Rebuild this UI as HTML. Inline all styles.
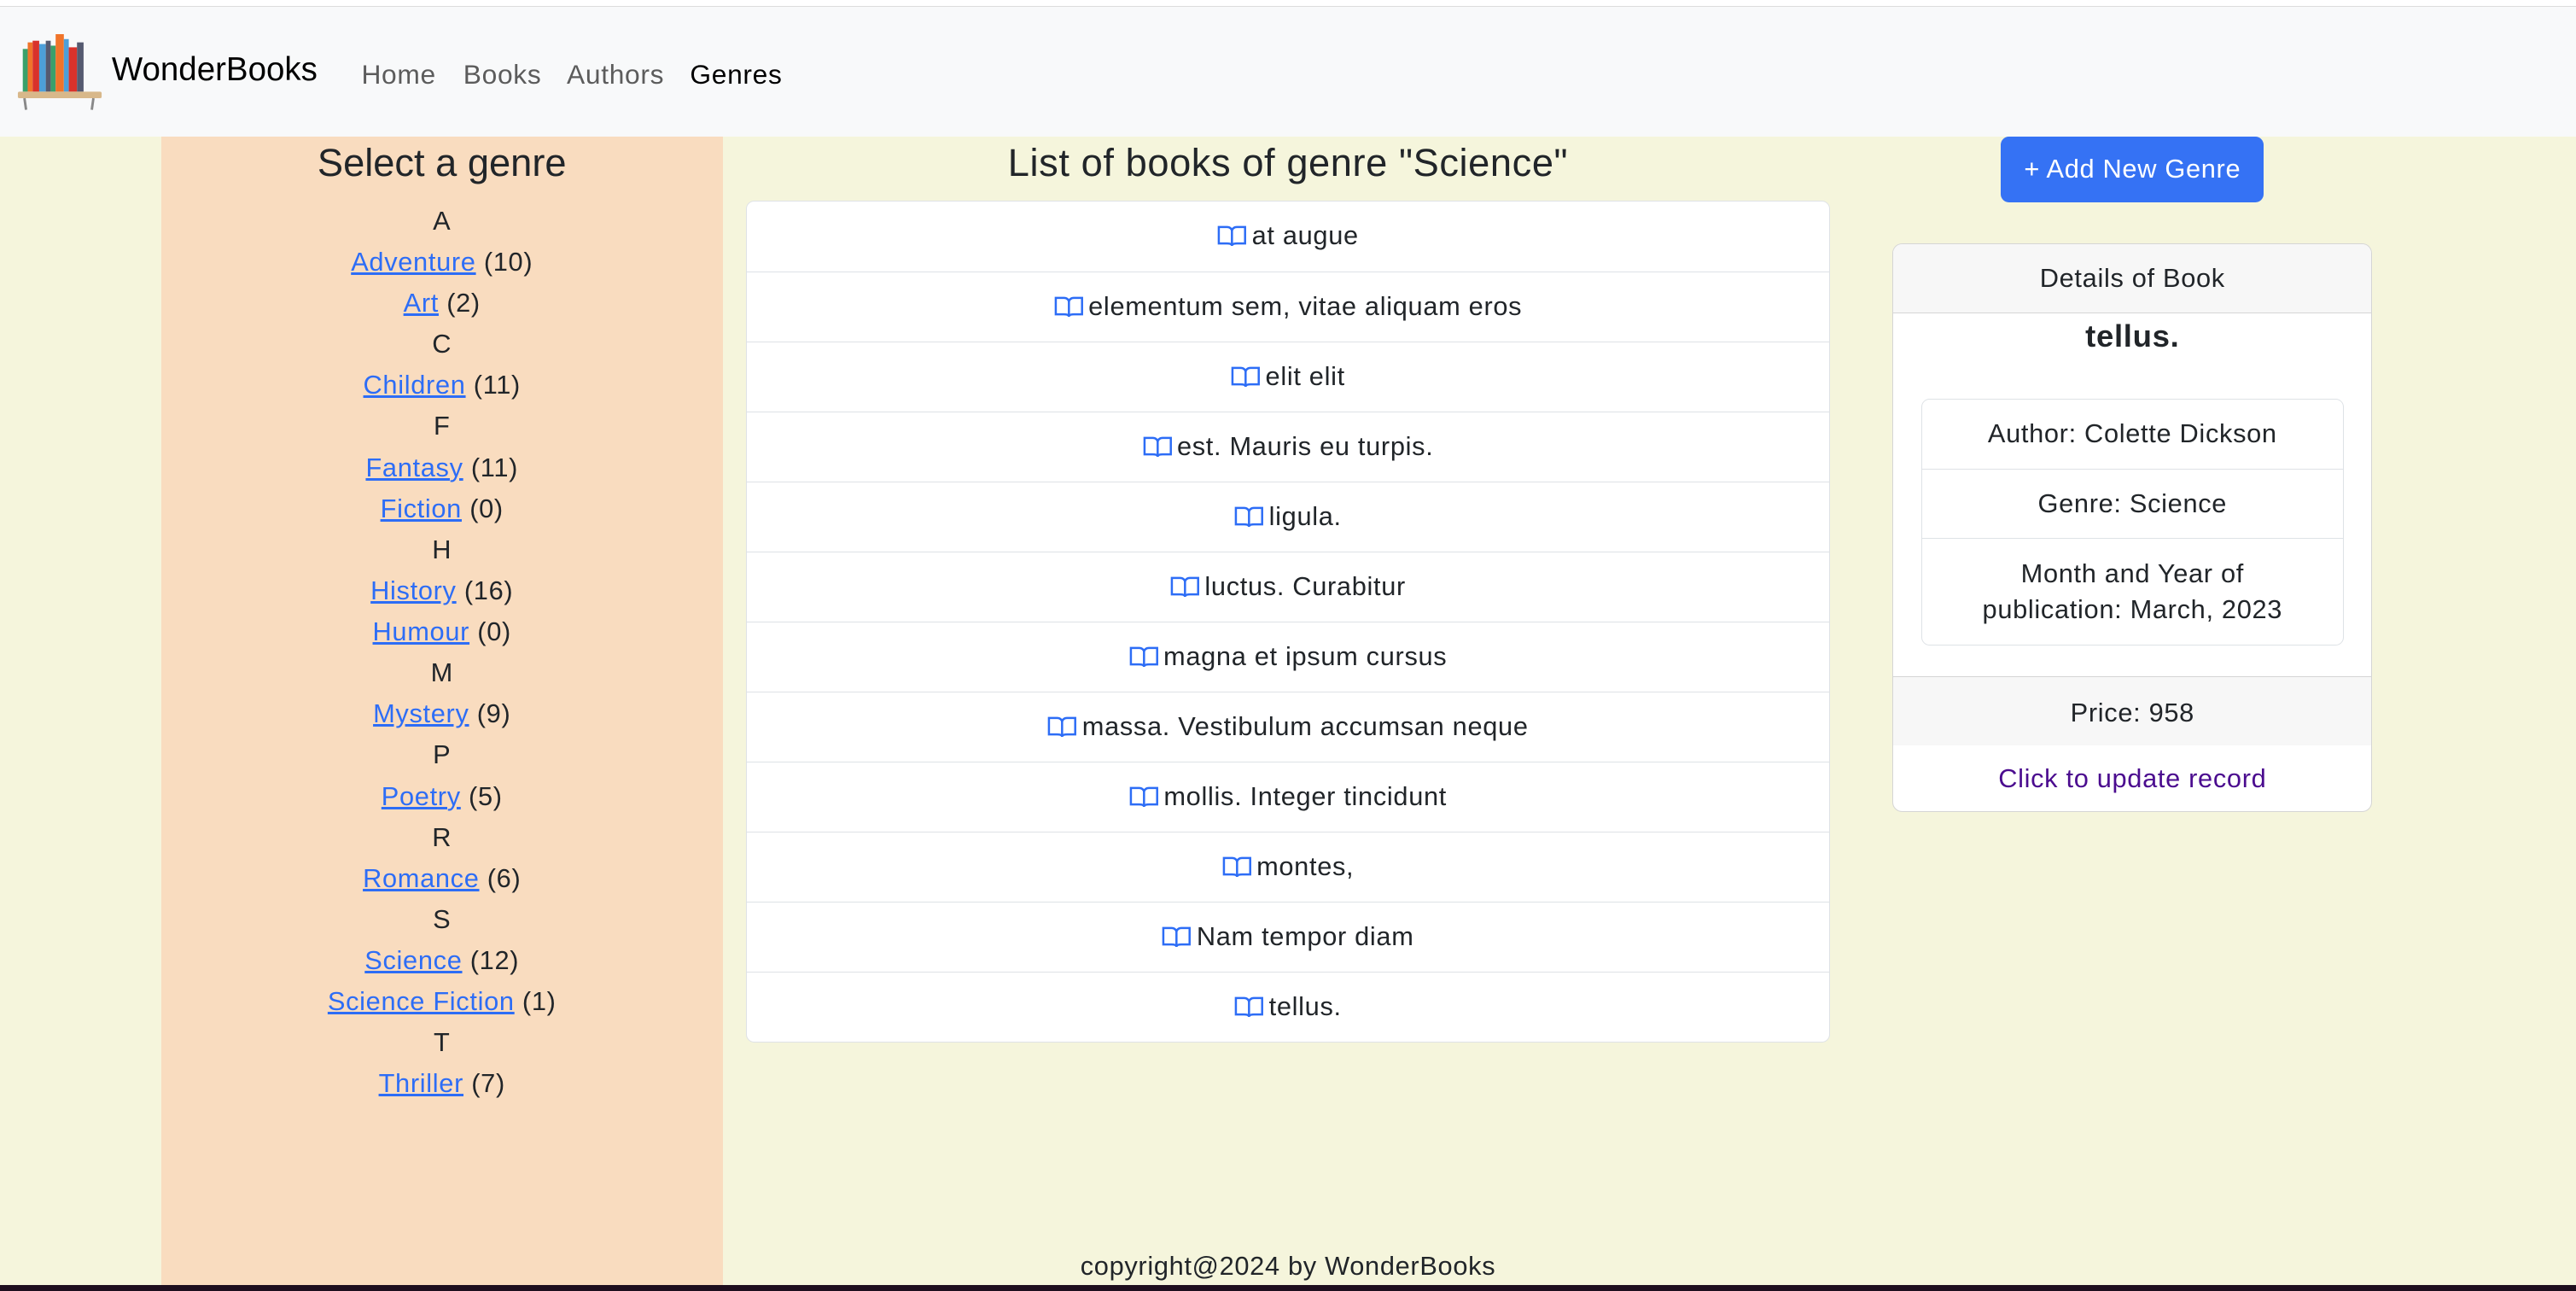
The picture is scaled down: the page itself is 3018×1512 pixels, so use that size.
<!DOCTYPE html>
<html><head><meta charset="utf-8"><style>
*{box-sizing:border-box;margin:0;padding:0}
html,body{width:3018px;height:1512px;overflow:hidden;background:#f5f5dc}
#w{zoom:1.92474;width:1568px;height:786px;position:relative;font-family:"Liberation Sans",sans-serif;color:#212529;font-size:16px;background:#f5f5dc;letter-spacing:0.35px}
.top{position:absolute;left:0;top:0;width:1568px;height:4px;background:#fff;border-bottom:1px solid #dcdcdc}
nav{position:absolute;left:0;top:4px;width:1568px;height:79px;background:#f8f9fa}
.brand{position:absolute;left:68px;top:27px;font-size:20px;color:#000;letter-spacing:0}
.nl{position:absolute;top:32px;font-size:16.5px;color:#5c5c5c}
.side{position:absolute;left:98px;top:83px;width:342px;height:703px;background:#f9dcbf;text-align:center}
.side h2{font-size:23.5px;font-weight:normal;margin-top:2px;line-height:28px;letter-spacing:0}
.side div{line-height:25px;font-size:16px}
.side div:first-of-type{margin-top:9px}
a{color:#2d6df6;text-decoration:underline}
.mt{position:absolute;left:454px;top:83px;width:660px;text-align:center;font-size:23.5px;line-height:32px;letter-spacing:0.3px}
.list{position:absolute;left:454px;top:122px;width:660px;background:#fff;border:1px solid #dee2e6;border-radius:5px}
.list div{height:42.6px;line-height:42px;text-align:center;border-top:1px solid #dee2e6;font-size:16px}
.list div:first-child{border-top:none}
.bk{display:inline-block;vertical-align:-2px;margin-right:3px}
.btn{position:absolute;left:1218px;top:83px;width:160px;height:40px;background:#3572f4;color:#fff;border-radius:5px;text-align:center;line-height:40px;font-size:16px}
.card{position:absolute;left:1152px;top:148px;width:292px;height:346px;background:#fff;border:1px solid #d5d5d5;border-radius:6px;overflow:hidden;text-align:center}
.ch{height:42px;line-height:42px;background:#f7f7f7;border-bottom:1px solid #d5d5d5}
.ct{font-weight:bold;font-size:19px;margin-top:2px;line-height:24px}
.inner{margin:26px 17px 0;border:1px solid #dee2e6;border-radius:5px}
.inner div{border-top:1px solid #dee2e6;padding:10px 4px;line-height:22px}
.inner div.m{padding:10px 30px}
.inner div:first-child{border-top:none}
.cf{position:absolute;left:0;top:263px;width:100%;height:42px;line-height:44px;background:#f7f7f7;border-top:1px solid #d5d5d5}
.cl{position:absolute;left:0;top:316px;width:100%;color:#4b0c8f}
.foot{position:absolute;left:454px;top:761px;width:660px;text-align:center;font-size:16px}
.dark{position:absolute;left:0;top:782px;width:1568px;height:4px;background:#1e0e1e}
</style></head><body><div id="w">
<div class="top"></div>
<nav>
<svg style="position:absolute;left:10px;top:17px" width="53" height="46" viewBox="0 0 53 46">
<rect x="4" y="9" width="3" height="26" fill="#3aa06a"/><rect x="7" y="5" width="3" height="30" fill="#f0742a"/>
<rect x="10" y="4" width="4" height="31" fill="#d9322b"/><rect x="14" y="6" width="4" height="29" fill="#4d9fd8"/>
<rect x="18" y="4" width="3" height="31" fill="#555a70"/><rect x="21" y="7" width="3" height="28" fill="#3aa06a"/>
<rect x="24" y="0" width="5" height="35" fill="#f0742a"/><rect x="29" y="3" width="3" height="32" fill="#4d9fd8"/>
<rect x="32" y="8" width="5" height="27" fill="#d9322b"/><rect x="37" y="5" width="4" height="30" fill="#555a70"/>
<rect x="1" y="35" width="51" height="4" rx="1" fill="#d8b88a"/>
<path d="M5 39 L6 46 M47 39 L46 46" stroke="#888" stroke-width="1.5"/></svg>
<div class="brand">WonderBooks</div>
<div class="nl" style="left:220px">Home</div><div class="nl" style="left:282px">Books</div><div class="nl" style="left:345px">Authors</div><div class="nl" style="left:420px;color:#000">Genres</div>
</nav>
<div class="side"><h2>Select a genre</h2>
<div>A</div><div><a>Adventure</a> (10)</div><div><a>Art</a> (2)</div><div>C</div><div><a>Children</a> (11)</div><div>F</div><div><a>Fantasy</a> (11)</div><div><a>Fiction</a> (0)</div><div>H</div><div><a>History</a> (16)</div><div><a>Humour</a> (0)</div><div>M</div><div><a>Mystery</a> (9)</div><div>P</div><div><a>Poetry</a> (5)</div><div>R</div><div><a>Romance</a> (6)</div><div>S</div><div><a>Science</a> (12)</div><div><a>Science Fiction</a> (1)</div><div>T</div><div><a>Thriller</a> (7)</div>
</div>
<div class="mt">List of books of genre "Science"</div>
<div class="list">
<div><svg class="bk" width="18" height="14" viewBox="0 0 18 14"><path d="M1 1.5h5c1.6 0 3 1 3 2.5v9c0-1-1.2-1.5-3-1.5H1zM17 1.5h-5c-1.6 0-3 1-3 2.5v9c0-1 1.2-1.5 3-1.5h5z" fill="none" stroke="#2d6df6" stroke-width="1.3"/></svg>at augue</div>
<div><svg class="bk" width="18" height="14" viewBox="0 0 18 14"><path d="M1 1.5h5c1.6 0 3 1 3 2.5v9c0-1-1.2-1.5-3-1.5H1zM17 1.5h-5c-1.6 0-3 1-3 2.5v9c0-1 1.2-1.5 3-1.5h5z" fill="none" stroke="#2d6df6" stroke-width="1.3"/></svg>elementum sem, vitae aliquam eros</div>
<div><svg class="bk" width="18" height="14" viewBox="0 0 18 14"><path d="M1 1.5h5c1.6 0 3 1 3 2.5v9c0-1-1.2-1.5-3-1.5H1zM17 1.5h-5c-1.6 0-3 1-3 2.5v9c0-1 1.2-1.5 3-1.5h5z" fill="none" stroke="#2d6df6" stroke-width="1.3"/></svg>elit elit</div>
<div><svg class="bk" width="18" height="14" viewBox="0 0 18 14"><path d="M1 1.5h5c1.6 0 3 1 3 2.5v9c0-1-1.2-1.5-3-1.5H1zM17 1.5h-5c-1.6 0-3 1-3 2.5v9c0-1 1.2-1.5 3-1.5h5z" fill="none" stroke="#2d6df6" stroke-width="1.3"/></svg>est. Mauris eu turpis.</div>
<div><svg class="bk" width="18" height="14" viewBox="0 0 18 14"><path d="M1 1.5h5c1.6 0 3 1 3 2.5v9c0-1-1.2-1.5-3-1.5H1zM17 1.5h-5c-1.6 0-3 1-3 2.5v9c0-1 1.2-1.5 3-1.5h5z" fill="none" stroke="#2d6df6" stroke-width="1.3"/></svg>ligula.</div>
<div><svg class="bk" width="18" height="14" viewBox="0 0 18 14"><path d="M1 1.5h5c1.6 0 3 1 3 2.5v9c0-1-1.2-1.5-3-1.5H1zM17 1.5h-5c-1.6 0-3 1-3 2.5v9c0-1 1.2-1.5 3-1.5h5z" fill="none" stroke="#2d6df6" stroke-width="1.3"/></svg>luctus. Curabitur</div>
<div><svg class="bk" width="18" height="14" viewBox="0 0 18 14"><path d="M1 1.5h5c1.6 0 3 1 3 2.5v9c0-1-1.2-1.5-3-1.5H1zM17 1.5h-5c-1.6 0-3 1-3 2.5v9c0-1 1.2-1.5 3-1.5h5z" fill="none" stroke="#2d6df6" stroke-width="1.3"/></svg>magna et ipsum cursus</div>
<div><svg class="bk" width="18" height="14" viewBox="0 0 18 14"><path d="M1 1.5h5c1.6 0 3 1 3 2.5v9c0-1-1.2-1.5-3-1.5H1zM17 1.5h-5c-1.6 0-3 1-3 2.5v9c0-1 1.2-1.5 3-1.5h5z" fill="none" stroke="#2d6df6" stroke-width="1.3"/></svg>massa. Vestibulum accumsan neque</div>
<div><svg class="bk" width="18" height="14" viewBox="0 0 18 14"><path d="M1 1.5h5c1.6 0 3 1 3 2.5v9c0-1-1.2-1.5-3-1.5H1zM17 1.5h-5c-1.6 0-3 1-3 2.5v9c0-1 1.2-1.5 3-1.5h5z" fill="none" stroke="#2d6df6" stroke-width="1.3"/></svg>mollis. Integer tincidunt</div>
<div><svg class="bk" width="18" height="14" viewBox="0 0 18 14"><path d="M1 1.5h5c1.6 0 3 1 3 2.5v9c0-1-1.2-1.5-3-1.5H1zM17 1.5h-5c-1.6 0-3 1-3 2.5v9c0-1 1.2-1.5 3-1.5h5z" fill="none" stroke="#2d6df6" stroke-width="1.3"/></svg>montes,</div>
<div><svg class="bk" width="18" height="14" viewBox="0 0 18 14"><path d="M1 1.5h5c1.6 0 3 1 3 2.5v9c0-1-1.2-1.5-3-1.5H1zM17 1.5h-5c-1.6 0-3 1-3 2.5v9c0-1 1.2-1.5 3-1.5h5z" fill="none" stroke="#2d6df6" stroke-width="1.3"/></svg>Nam tempor diam</div>
<div><svg class="bk" width="18" height="14" viewBox="0 0 18 14"><path d="M1 1.5h5c1.6 0 3 1 3 2.5v9c0-1-1.2-1.5-3-1.5H1zM17 1.5h-5c-1.6 0-3 1-3 2.5v9c0-1 1.2-1.5 3-1.5h5z" fill="none" stroke="#2d6df6" stroke-width="1.3"/></svg>tellus.</div>
</div>
<div class="btn">+ Add New Genre</div>
<div class="card">
<div class="ch">Details of Book</div>
<div class="ct">tellus.</div>
<div class="inner"><div>Author: Colette Dickson</div><div>Genre: Science</div><div class="m">Month and Year of publication: March, 2023</div></div>
<div class="cf">Price: 958</div>
<div class="cl">Click to update record</div>
</div>
<div class="foot">copyright@2024 by WonderBooks</div>
<div class="dark"></div>
</div></body></html>
